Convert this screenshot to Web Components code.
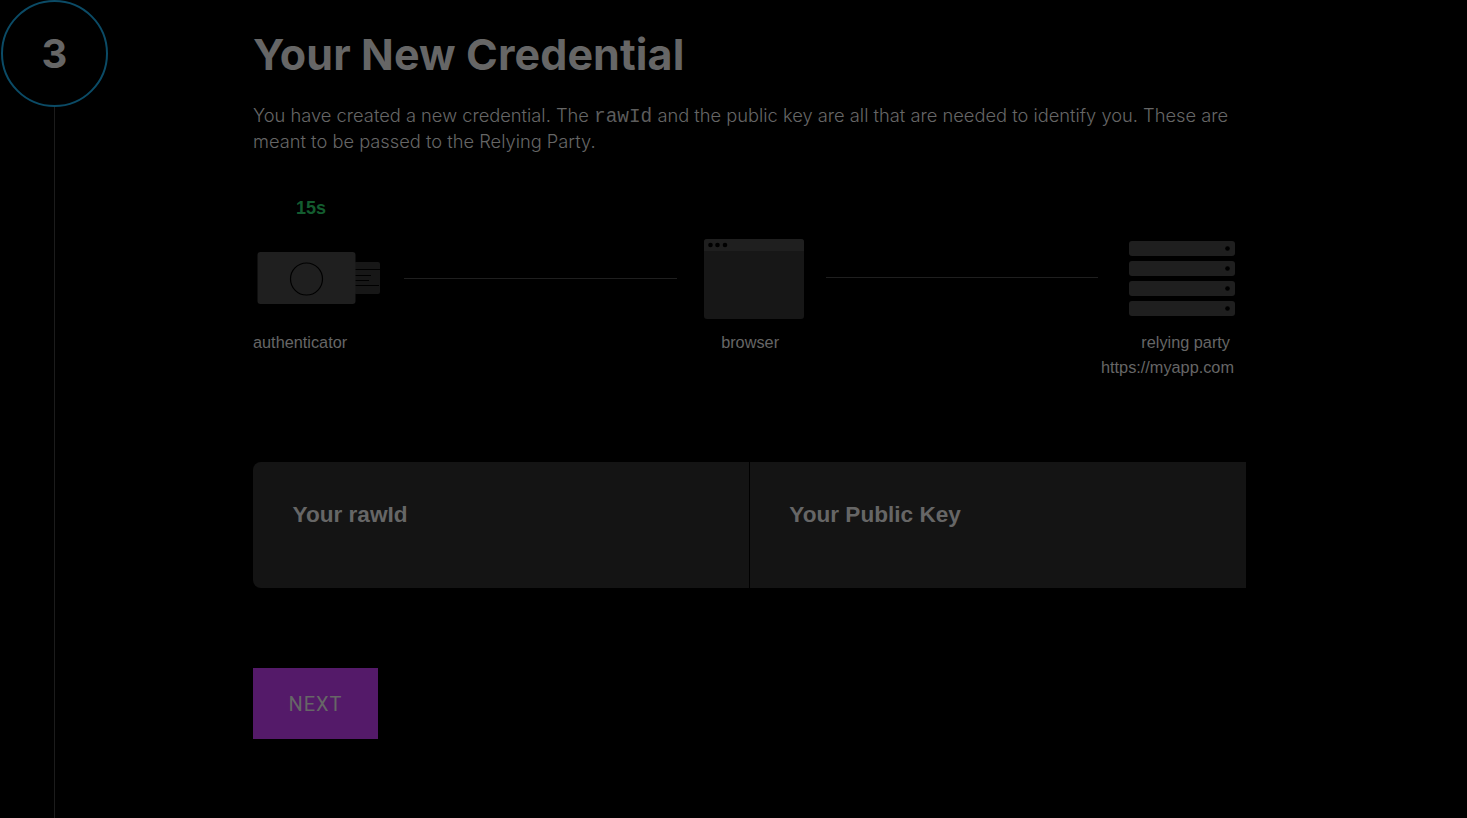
<!DOCTYPE html>
<html lang="en"><head><meta charset="utf-8"><title>Your New Credential</title>
<style>
html,body{margin:0;padding:0;background:#000;height:100%;overflow:hidden}
</style></head><body>
<step-page number="3">
  <h-title slot="title">Your New Credential</h-title>
  <span slot="intro">You have created a new credential. The <code-word>rawId</code-word> and the public key are all that are needed to identify you. These are<br>meant to be passed to the Relying Party.</span>
  <flow-diagram slot="diagram" timer="15s"></flow-diagram>
  <key-panels slot="panels"></key-panels>
  <next-button slot="action">NEXT</next-button>
</step-page>
<script>
function def(name, html){
  customElements.define(name, class extends HTMLElement{
    connectedCallback(){
      if(this.shadowRoot) return;
      const r=this.attachShadow({mode:'open'});
      r.innerHTML=typeof html==='function'?html(this):html;
    }
  });
}
def('step-page', el=>`<style>
:host{display:flex;height:818px;background:#000;color:#666;font-family:"Liberation Sans",sans-serif;box-sizing:border-box}
.rail{width:253px;flex:none;display:flex;flex-direction:column;padding-left:1px;box-sizing:border-box}
.circle{width:107px;height:107px;box-sizing:border-box;border:2px solid #0b4b66;border-radius:50%;display:flex;align-items:center;justify-content:center;font:700 40px "Inter",sans-serif;color:#666}
.line{width:1px;flex:1;background:#1c1c1c;margin-left:53px}
.main{width:993px;flex:none;display:flex;flex-direction:column}
.title{padding-top:29px}
.intro{margin-top:23px;font:300 18.3px/26px "Inter",sans-serif;color:#666;width:990px;height:52px}
.diagram{margin-top:41px}
.panels{margin-top:82px}
.action{margin-top:80px}
</style>
<div class="rail"><div class="circle">${el.getAttribute('number')}</div><div class="line"></div></div>
<div class="main">
<div class="title"><slot name="title"></slot></div>
<div class="intro"><slot name="intro"></slot></div>
<div class="diagram"><slot name="diagram"></slot></div>
<div class="panels"><slot name="panels"></slot></div>
<div class="action"><slot name="action"></slot></div>
</div>`);
def('h-title',`<style>:host{display:block;font:700 43px/50px "Inter",sans-serif;color:#666;letter-spacing:.1px}</style><slot></slot>`);
def('code-word',`<style>:host{display:inline;font:400 19.4px "Liberation Mono",monospace;color:#5c5c5c}</style><slot></slot>`);
def('flow-diagram', el=>`<style>
:host{display:block;font:16.3px/25px "Liberation Sans",sans-serif;color:#666}
.timer{height:26px;padding-left:43px;font:700 18px/26px "Liberation Sans",sans-serif;color:#135c2f}
.icons{display:flex;align-items:center;height:80px;margin-top:18px}
.icons svg{display:block;flex:none}
.wire{height:1px;background:#1f1f1f;flex:none}
.labels{display:flex;margin-top:11px;align-items:flex-start}
.rp{margin-left:auto;text-align:right;width:134px;margin-right:12px}
.rp div:first-child{padding-right:4px}
.b{margin-left:374px}
</style>
<div class="timer">${el.getAttribute('timer')}</div>
<div class="icons">
<svg style="margin-left:4px;margin-bottom:2px" width="123" height="52" viewBox="0 0 123 52">
<rect x="97" y="10" width="26" height="32" rx="2" fill="#171717"/>
<path d="M98 17.5h26M98 23.5h16M98 28.5h14M98 33.5h24" stroke="#000" stroke-width="1" fill="none"/>
<rect x=".5" y="0" width="98" height="52" rx="3" fill="#1f1f1f"/>
<circle cx="49.500" cy="27" r="16" fill="none" stroke="#000" stroke-width="1.2"/>
</svg>
<div class="wire" style="margin-left:24px;width:273px;margin-bottom:2px"></div>
<svg style="margin-left:27px" width="100" height="80" viewBox="0 0 100 80">
<rect width="100" height="80" rx="3" fill="#171717"/>
<path d="M0 12V3a3 3 0 0 1 3-3h94a3 3 0 0 1 3 3v9z" fill="#1f1f1f"/>
<circle cx="6.500" cy="6" r="2.300" fill="#000"/><circle cx="13.500" cy="6" r="2.300" fill="#000"/><circle cx="21" cy="6" r="2.300" fill="#000"/>
</svg>
<div class="wire" style="margin-left:22px;width:272px;margin-bottom:3px"></div>
<svg style="margin-left:31px" width="106" height="76" viewBox="0 0 106 76">
<g fill="#1f1f1f"><rect width="106" height="15" rx="3"/><rect y="20" width="106" height="15" rx="3"/><rect y="40" width="106" height="15" rx="3"/><rect y="60" width="106" height="15" rx="3"/></g>
<g fill="#000"><circle cx="98.500" cy="7.500" r="2.300"/><circle cx="98.500" cy="27.500" r="2.300"/><circle cx="98.500" cy="47.500" r="2.300"/><circle cx="98.500" cy="67.500" r="2.300"/></g>
</svg>
</div>
<div class="labels"><div>authenticator</div><div class="b">browser</div><div class="rp"><div>relying party</div><div>https://myapp.com</div></div></div>`);
def('key-panels',`<style>
:host{display:flex;height:126px;background:#141414;border-radius:8px 0 0 8px;font:700 22.6px/30px "Liberation Sans",sans-serif;color:#666}
.cell{flex:1 1 0;padding:38px 0 0 39.500px;box-sizing:border-box}
.cell+.cell{border-left:1px solid #000;padding-left:39px}
</style><div class="cell">Your rawId</div><div class="cell">Your Public Key</div>`);
def('next-button',`<style>
:host{display:flex;align-items:center;justify-content:center;width:125px;height:71px;background:#541a69;color:#666;font:400 20px "Roboto",sans-serif;letter-spacing:1px}
</style><slot></slot>`);
</script>
</body></html>
